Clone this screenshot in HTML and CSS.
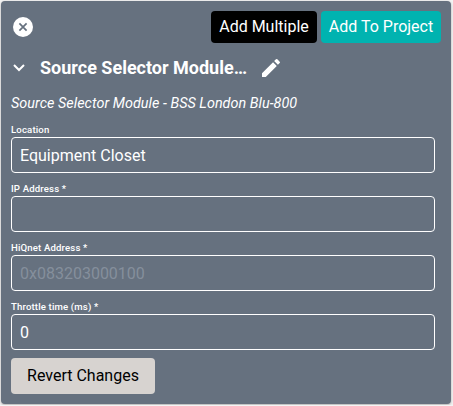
FILE: index.html
```html
<!DOCTYPE html>
<html lang="en">
<head>
<meta charset="utf-8">
<title>Source Selector Module</title>
<link rel="stylesheet" href="styles.css">
</head>
<body>
<section class="card">
  <header class="toolbar">
    <button class="icon-button" type="button" aria-label="Close">
      <svg width="20" height="20" viewBox="0 0 20 20"><circle cx="10" cy="10" r="10" fill="#fff"/><path d="M6.4 6.4l7.2 7.2M13.6 6.4l-7.2 7.2" stroke="#66717f" stroke-width="1.7"/></svg>
    </button>
    <div class="actions">
      <button class="button button-dark" type="button">Add Multiple</button>
      <button class="button button-teal" type="button">Add To Project</button>
    </div>
  </header>
  <div class="heading">
    <svg class="chevron" width="12" height="8" viewBox="0 0 12 8"><path d="M1 1l5 5 5-5" fill="none" stroke="#fff" stroke-width="2"/></svg>
    <h1 class="title">Source Selector Module…</h1>
    <svg class="pencil" width="24" height="24" viewBox="0 0 24 24"><path fill="#fff" d="M3 17.25V21h3.75L17.81 9.94l-3.75-3.75L3 17.25zM20.71 7.04a1 1 0 0 0 0-1.41l-2.34-2.34a1 1 0 0 0-1.41 0l-1.83 1.83 3.75 3.75 1.83-1.83z"/></svg>
  </div>
  <p class="subtitle">Source Selector Module - BSS London Blu-800</p>
  <form class="fields">
    <label class="field"><span class="label">Location</span><input class="input" type="text" value="Equipment Closet"></label>
    <label class="field"><span class="label">IP Address *</span><input class="input" type="text"></label>
    <label class="field"><span class="label">HiQnet Address *</span><input class="input" type="text" placeholder="0x083203000100"></label>
    <label class="field"><span class="label">Throttle time (ms) *</span><input class="input" type="text" value="0"></label>
    <button class="button button-light" type="button">Revert Changes</button>
  </form>
</section>
</body>
</html>
```
FILE: styles.css
```css
* { box-sizing: border-box; }

body {
  margin: 0;
  padding: 1px;
  background: #f4f4f4;
  font-family: Roboto, sans-serif;
  font-size: 16px;
  color: #fff;
}

.card {
  width: 450px;
  height: 403px;
  padding: 10px;
  border-radius: 4px;
  background: #66717f;
  box-shadow: 0 1px 3px rgba(0, 0, 0, 0.3);
}

.toolbar {
  display: flex;
  justify-content: space-between;
  align-items: center;
  height: 32px;
}

.icon-button {
  display: flex;
  margin: 0 0 0 2px;
  padding: 0;
  border: 0;
  background: none;
}

.actions { display: flex; gap: 4px; }

.button {
  height: 32px;
  padding: 0;
  border: 0;
  border-radius: 4px;
  font: 16px/32px Roboto, sans-serif;
  text-align: center;
  color: #fff;
}

.button-dark { width: 106px; background: #000; }
.button-teal { width: 120px; background: #00b3b0; }

.button-light {
  display: block;
  width: 144px;
  height: 36px;
  margin-top: -1px;
  background: #d7d3d0;
  color: #000;
}

.heading {
  display: flex;
  align-items: center;
  height: 24px;
  margin-top: 13px;
  padding-left: 2px;
}

.title {
  width: 208px;
  margin: 0 11px 0 15px;
  font-size: 18px;
  line-height: 24px;
  font-weight: 700;
  white-space: nowrap;
}

.subtitle {
  margin: 14px 0 0;
  font-size: 14.4px;
  line-height: 20px;
  font-style: italic;
  letter-spacing: 0.03px;
}

.fields { margin-top: 9px; }

.field {
  display: block;
  height: 59px;
}

.label {
  display: block;
  height: 14px;
  font-size: 9.6px;
  line-height: 14px;
  font-weight: 500;
  letter-spacing: 0.15px;
}

.input {
  display: block;
  width: 424px;
  height: 36px;
  padding: 0 8px;
  border: 1px solid #fff;
  border-radius: 4px;
  outline: 0;
  background: transparent;
  font: 16px Roboto, sans-serif;
  color: #fff;
}

.input::placeholder { color: #858f9c; opacity: 1; }
```
